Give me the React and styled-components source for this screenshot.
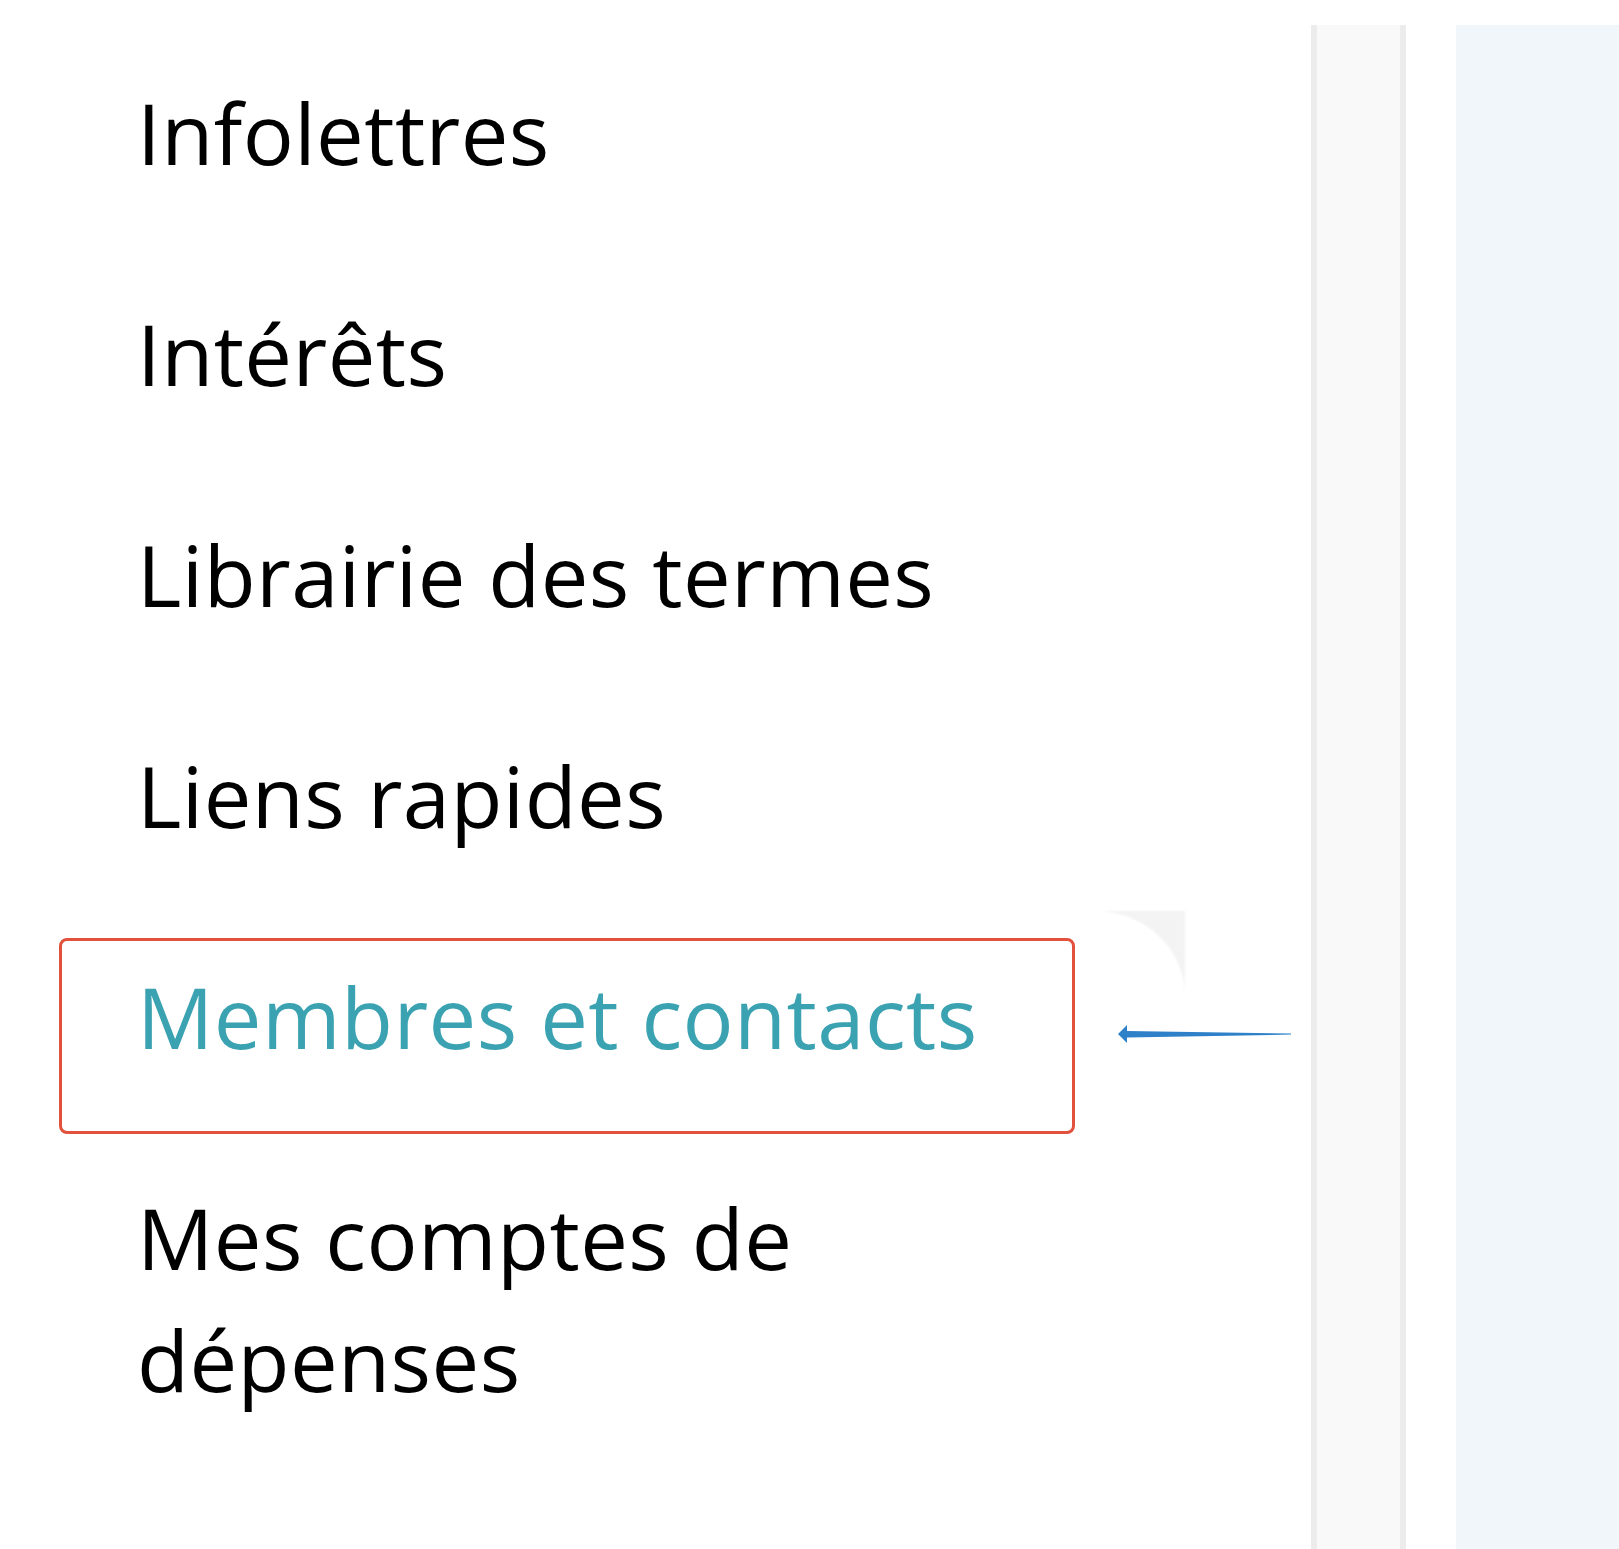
import React from 'react'
import styled, { createGlobalStyle } from 'styled-components'

const GlobalStyle = createGlobalStyle`
  html, body {
    margin: 0;
    padding: 0;
    height: 100%;
    overflow: hidden;
    background: #fff;
  }
  body {
    font-family: "Open Sans", "Noto Sans", sans-serif;
  }
`

const Page = styled.div`
  display: flex;
  height: 100vh;
  overflow: hidden;
`

const Sidebar = styled.aside`
  width: 1311px;
  flex-shrink: 0;
`

const Menu = styled.ul`
  list-style: none;
  margin: 0;
  padding: 21px 0 0 137px;
`

const Item = styled.li`
  position: relative;
  padding: 50px 0 49px;
  font-size: 85px;
  font-weight: 500;
  letter-spacing: 0.4px;
  line-height: 122px;
  color: ${p => (p.$active ? '#3ba2b1' : '#000')};
  white-space: pre-line;
`

const Highlight = styled.div`
  position: absolute;
  left: -78px;
  top: 33px;
  width: 1016px;
  height: 196px;
  box-sizing: border-box;
  border: 3px solid #e2513c;
  border-radius: 8px;
  pointer-events: none;
`

const Corner = styled.svg`
  position: absolute;
  left: 957px;
  top: 5px;
`

const Pointer = styled.svg`
  position: absolute;
  left: 981px;
  top: 118px;
`

const Track = styled.div`
  width: 95px;
  flex-shrink: 0;
  margin-top: 25px;
  box-sizing: border-box;
  background: #f9f9f9;
  border-left: 6px solid #ececec;
  border-right: 6px solid #ececec;
`

const Panel = styled.div`
  flex: 1;
  margin: 25px 0 0 50px;
  background: #f1f6fb;
`

const items = [
  'Infolettres',
  'Intérêts',
  'Librairie des termes',
  'Liens rapides',
  'Membres et contacts',
  'Mes comptes de\ndépenses',
  'Nouvelles',
]

export default function App() {
  return (
    <>
      <GlobalStyle />
      <Page>
        <Sidebar>
          <Menu>
            {items.map(label => {
              const active = label === 'Membres et contacts'
              return (
                <Item key={label} $active={active}>
                  {label}
                  {active && (
                    <>
                      <Highlight />
                      <Corner width="92" height="88" viewBox="0 0 92 88">
                        <defs>
                          <filter id="soft">
                            <feGaussianBlur stdDeviation="1" />
                          </filter>
                        </defs>
                        <path d="M2 1 H91 V86 A89 85 0 0 0 2 1 Z" fill="#f3f3f3" filter="url(#soft)" />
                      </Corner>
                      <Pointer width="176" height="22" viewBox="0 0 176 22">
                        <path d="M0 11 L9 2 L9 8 L173 10.6 L173 11.6 L9 14.5 L9 20 Z" fill="#2e80c9" />
                      </Pointer>
                    </>
                  )}
                </Item>
              )
            })}
          </Menu>
        </Sidebar>
        <Track />
        <Panel />
      </Page>
    </>
  )
}
